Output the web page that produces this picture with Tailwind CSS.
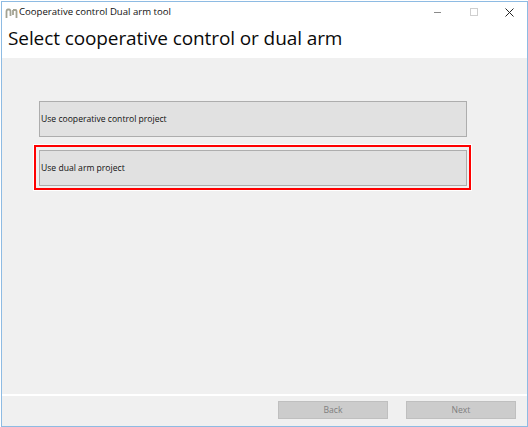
<!doctype html>
<html><head><meta charset="utf-8"><script src="https://cdn.jsdelivr.net/npm/@tailwindcss/browser@4"></script></head>
<body class="bg-white">
<div class="w-[528px] h-[427px] pl-px pt-px font-['Open_Sans',sans-serif] overflow-hidden">
  <div class="w-[527px] h-[426px] border border-[#8ebbe3] flex flex-col bg-white">
    <div class="h-[17px] flex items-center pl-[3px] shrink-0 relative">
      <svg width="13" height="10" viewBox="0 0 13 10" class="shrink-0 mt-[4px]" fill="none" stroke="#a3a394" stroke-width="1.800"><path d="M1.500 10V3.500Q1.500 1.500 3 1.500H4Q5.500 1.500 5.500 3.500V8"/><path d="M8 2H10.500Q11.500 2 11.500 3V10"/><path d="M8 2V7"/></svg>
      <span class="ml-[1px] mt-[2px] text-[9.600px] leading-none text-[#111] whitespace-nowrap">Cooperative control Dual arm tool</span>
      <div class="ml-auto flex items-center mt-[3px]">
        <div class="w-[7px] h-px bg-[#8a8a8a] mr-[29px]"></div>
        <div class="w-2 h-2 border border-[#cfcfcf] mr-[27px]"></div>
        <svg width="9" height="9" viewBox="0 0 9 9" class="mr-[13px]" stroke="#222" stroke-width="1" fill="none"><path d="M.5.500l8 8M8.500.500l-8 8"/></svg>
      </div>
    </div>
    <div class="h-[39px] shrink-0 pl-[6px] flex items-start">
      <h1 class="text-[19px] tracking-[-0.1px] leading-[26px] mt-[6px] text-[#0a0a0a] whitespace-nowrap font-normal">Select cooperative control or dual arm</h1>
    </div>
    <div class="flex-1 bg-[#f0f0f0] pt-[43px] pl-[37px] flex flex-col gap-[13px]">
      <button class="w-[428px] h-9 border border-[#adadad] bg-[#e1e1e1] text-left pl-px text-[8.600px] text-[#111]">Use cooperative control project</button>
      <button class="relative w-[428px] h-9 border border-[#adadad] bg-[#e1e1e1] text-left pl-px text-[8.600px] text-[#111]">Use dual arm project
        <span class="absolute -left-[6px] -right-[5px] -top-[6px] -bottom-[5px] border-2 border-[#ff0000] shadow-[0_0_0_1px_#fff]"></span>
      </button>
    </div>
    <div class="h-[2px] bg-white shrink-0"></div>
    <div class="h-[30px] shrink-0 bg-[#f0f0f0] flex justify-end items-start gap-[18px] pt-[5px] pr-[11px]">
      <button class="w-[110px] h-[18px] bg-[#cccccc] border border-[#bfbfbf] text-[8.600px] text-[#7f7f7f]">Back</button>
      <button class="w-[110px] h-[18px] bg-[#cccccc] border border-[#bfbfbf] text-[8.600px] text-[#7f7f7f]">Next</button>
    </div>
  </div>
</div>
</body></html>
